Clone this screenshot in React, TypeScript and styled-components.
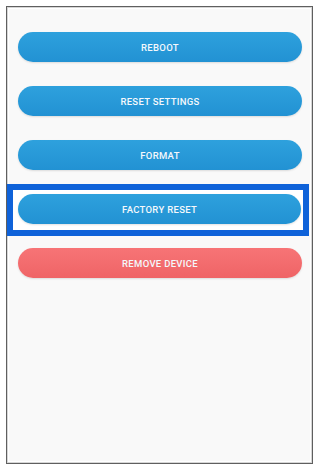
import styled, {createGlobalStyle} from 'styled-components'

const GlobalStyle = createGlobalStyle`
    html, body {
        margin: 0;
        padding: 0;
        background: #ffffff;
        font-family: Roboto, "Liberation Sans", sans-serif;
    }
`

interface Action {
    label: string;
    danger?: boolean;
    selected?: boolean;
}

const actions: Action[] = [
    {label: 'Reboot'},
    {label: 'Reset settings'},
    {label: 'Format'},
    {label: 'Factory reset', selected: true},
    {label: 'Remove device', danger: true},
]

export default function App() {
    return (
        <>
            <GlobalStyle />
            <Frame>
                <List>
                    {actions.map(a => (
                        <Row key={a.label} $selected={a.selected}>
                            <ActionButton $danger={a.danger}>{a.label}</ActionButton>
                        </Row>
                    ))}
                </List>
            </Frame>
        </>
    )
}

const Frame = styled.div`
    box-sizing: border-box;
    margin: 6px 0 0 6px;
    width: 307px;
    height: 458px;
    border: 1px solid #5f5f5f;
    box-shadow: inset 0 0 0 1px #d6d6d6, inset 0 0 0 2px #ffffff;
    background: #f9f9f9;
`
const List = styled.div`
    display: flex;
    flex-direction: column;
    gap: 24px;
    padding-top: 25px;
`
const Row = styled.div<{$selected?: boolean}>`
    display: flex;
    padding: 0 10px 0 11px;
    ${p => p.$selected && `
        margin: -10px 3px -12px 0;
        padding: 4px 2px 6px 5px;
        border: 6px solid #0f62d9;
        background: #ffffff;
    `}
`
const ActionButton = styled.button<{$danger?: boolean}>`
    flex: 1;
    height: 30px;
    border: none;
    border-radius: 15px;
    padding: 0;
    color: #f4f8fc;
    font-family: Roboto, "Liberation Sans", sans-serif;
    font-size: 9.5px;
    font-weight: 500;
    letter-spacing: 0.3px;
    text-transform: uppercase;
    cursor: pointer;
    background: ${p => p.$danger
        ? 'linear-gradient(to bottom, #f77476, #ef6466)'
        : 'linear-gradient(to bottom, #2ea1dd, #2292d3)'};
    box-shadow: 0 1px 2px rgba(0, 0, 0, 0.12);
`
